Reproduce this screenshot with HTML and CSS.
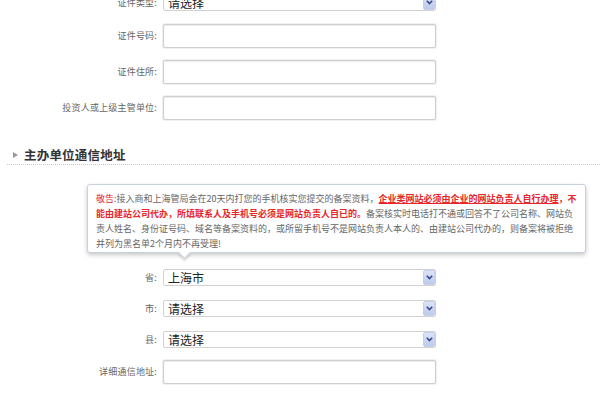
FILE: index.html
```html
<!DOCTYPE html>
<html lang="zh-CN">
<head>
<meta charset="utf-8">
<title>备案信息</title>
<link rel="stylesheet" href="styles.css">
</head>
<body>
<div class="page">
  <div class="form">
    <div class="row row-first">
      <label class="lbl">证件类型:</label>
      <div class="sel"><span class="sel-text">请选择</span><span class="sel-btn"><svg width="7" height="5" viewBox="0 0 7 5"><path d="M0.8 0.8 L3.5 3.6 L6.2 0.8" fill="none" stroke="#34468c" stroke-width="1.5"/></svg></span></div>
    </div>
    <div class="row row-in">
      <label class="lbl">证件号码:</label>
      <div class="inp"></div>
    </div>
    <div class="row row-in">
      <label class="lbl">证件住所:</label>
      <div class="inp"></div>
    </div>
    <div class="row row-in">
      <label class="lbl">投资人或上级主管单位:</label>
      <div class="inp"></div>
    </div>
  </div>

  <div class="section-head">
    <span class="tri"></span>
    <h3 class="section-title">主办单位通信地址</h3>
  </div>

  <div class="notice">
    <span class="red">敬告</span>:接入商和上海管局会在20天内打您的手机核实您提交的备案资料，<b class="red u">企业类网站必须由企业的网站负责人自行办理</b><b class="red">，不</b><br>
    <b class="red">能由建站公司代办，所填联系人及手机号必须是网站负责人自已的。</b>备案核实时电话打不通或回答不了公司名称、网站负<br>
    责人姓名、身份证号码、域名等备案资料的，或所留手机号不是网站负责人本人的、由建站公司代办的，则备案将被拒绝<br>
    并列为黑名单2个月内不再受理!
  </div>

  <div class="form form-addr">
    <div class="row row-sel-first">
      <label class="lbl">省:</label>
      <div class="sel"><span class="sel-text">上海市</span><span class="sel-btn"><svg width="7" height="5" viewBox="0 0 7 5"><path d="M0.8 0.8 L3.5 3.6 L6.2 0.8" fill="none" stroke="#34468c" stroke-width="1.5"/></svg></span></div>
    </div>
    <div class="row row-sel">
      <label class="lbl">市:</label>
      <div class="sel"><span class="sel-text">请选择</span><span class="sel-btn"><svg width="7" height="5" viewBox="0 0 7 5"><path d="M0.8 0.8 L3.5 3.6 L6.2 0.8" fill="none" stroke="#34468c" stroke-width="1.5"/></svg></span></div>
    </div>
    <div class="row row-sel">
      <label class="lbl">县:</label>
      <div class="sel"><span class="sel-text">请选择</span><span class="sel-btn"><svg width="7" height="5" viewBox="0 0 7 5"><path d="M0.8 0.8 L3.5 3.6 L6.2 0.8" fill="none" stroke="#34468c" stroke-width="1.5"/></svg></span></div>
    </div>
    <div class="row row-addr">
      <label class="lbl">详细通信地址:</label>
      <div class="inp"></div>
    </div>
  </div>
</div>
</body>
</html>
```

FILE: styles.css
```css
html, body {
  margin: 0;
  padding: 0;
  background: #ffffff;
}

body {
  font-family: "Noto Sans CJK SC", "Noto Sans", "Liberation Sans", sans-serif;
  color: #555;
  overflow: hidden;
}

.page {
  width: 600px;
  height: 400px;
  overflow: hidden;
}

.form {
  display: flex;
  flex-direction: column;
}

.row {
  display: flex;
  align-items: center;
  gap: 6px;
}

.row-first {
  margin-top: -6px;
}

.row-in {
  margin-top: 12px;
}

.row-first + .row-in {
  margin-top: 13px;
}

.row-sel-first {
  margin-top: 16px;
}

.row-sel {
  margin-top: 14px;
}

.row-addr {
  margin-top: 12px;
}

.lbl {
  width: 157px;
  flex: none;
  text-align: right;
  font-size: 9px;
  line-height: 12px;
  color: #666;
  letter-spacing: 0.2px;
}

.inp {
  width: 273px;
  height: 24px;
  box-sizing: border-box;
  border: 1px solid #cfcfcf;
  border-radius: 2px;
  box-shadow: inset 0 1px 1px rgba(0, 0, 0, 0.08), 0 0 0 1px #f0f0f0;
  background: #fff;
}

.sel {
  width: 273px;
  height: 17px;
  box-sizing: border-box;
  border: 1px solid #d2d2d2;
  border-radius: 2px;
  background: #fff;
  display: flex;
  align-items: center;
  justify-content: space-between;
}

.sel-text {
  padding-left: 4px;
  font-size: 12px;
  line-height: 15px;
  color: #222;
}

.sel-btn {
  width: 12px;
  height: 15px;
  box-sizing: border-box;
  display: flex;
  align-items: center;
  justify-content: center;
  background: linear-gradient(#dbe4f7, #bccbeb);
  border: 1px solid #c4d0ea;
  border-radius: 2px;
}

.section-head {
  margin-top: 25px;
  margin-left: 7px;
  height: 19px;
  border-bottom: 1px dotted #c8c8c8;
  display: flex;
  align-items: center;
  gap: 6px;
  padding-left: 6px;
}

.tri {
  width: 0;
  height: 0;
  border-top: 3px solid transparent;
  border-bottom: 3px solid transparent;
  border-left: 5px solid #9a9a9a;
}

.section-title {
  margin: 0;
  font-size: 12.5px;
  line-height: 19px;
  font-weight: bold;
  color: #333;
  letter-spacing: 0.2px;
}

.notice {
  position: relative;
  margin-top: 19px;
  margin-left: 87px;
  width: 499px;
  height: 69px;
  box-sizing: border-box;
  padding: 6px 0 0 8px;
  border: 1px solid #c9d1df;
  border-radius: 3px;
  box-shadow: 0 2px 4px rgba(0, 0, 0, 0.22);
  background: #fff;
  font-size: 9px;
  line-height: 15px;
  color: #666;
  white-space: nowrap;
}

.notice::after {
  content: "";
  position: absolute;
  left: 92px;
  bottom: -5px;
  width: 8px;
  height: 8px;
  background: #fff;
  border-right: 1px solid #c9d1df;
  border-bottom: 1px solid #c9d1df;
  transform: rotate(45deg);
  box-shadow: 2px 2px 2px rgba(0, 0, 0, 0.12);
}

.red {
  color: #e8262a;
}

.u {
  text-decoration: underline;
}
```
